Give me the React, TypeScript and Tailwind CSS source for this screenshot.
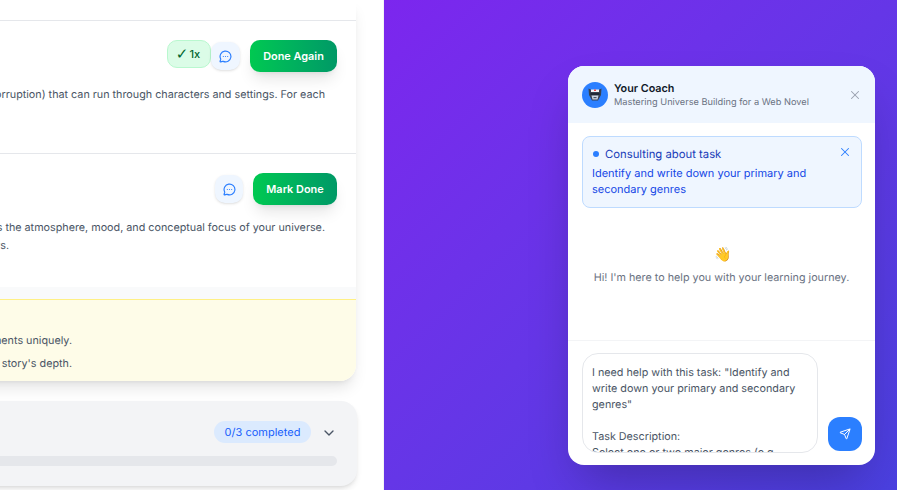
import { X, Send, ChevronDown, MessageCircleMore } from "lucide-react";

function Line({ pr, className, children }: { pr: string; className: string; children: React.ReactNode }) {
  return <div className={`whitespace-nowrap text-right ${pr} ${className}`}>{children}</div>;
}

function ChatBtn({ className }: { className: string }) {
  return (
    <button className={`flex h-[28px] items-center justify-center rounded-[10px] bg-blue-50 text-blue-500 shadow-sm ${className}`}>
      <MessageCircleMore size={13} strokeWidth={2.2} />
    </button>
  );
}

function CoachFace() {
  return (
    <svg width="14" height="15" viewBox="0 0 14 15" aria-hidden="true">
      <path d="M0.5 1.5 L3.5 3 H10.5 L13.5 1.5 L13 8 L10 13.5 H4 L1 8 Z" fill="#374151" />
      <rect x="3" y="2.5" width="8" height="2.5" fill="#f3f4f6" />
      <rect x="6" y="2.5" width="2" height="1.5" fill="#ef4444" />
      <rect x="2.5" y="6" width="9" height="2" fill="#1f2937" />
      <path d="M3.5 8.5 H10.5 L9.5 12.5 H4.5 Z" fill="#cbd5e1" />
      <rect x="5.5" y="10" width="3" height="1.2" fill="#475569" />
    </svg>
  );
}

export default function App() {
  return (
    <div className="flex h-[490px] w-[897px] overflow-hidden bg-white font-['Inter',sans-serif] [text-rendering:geometricPrecision]">
      <div className="relative h-full w-[384px] shrink-0 overflow-hidden border-r border-gray-100 bg-white">
        <div className="ml-[-344px] w-[700px]">
          <div className="overflow-hidden rounded-b-[16px] bg-white shadow-lg">
            <div className="h-[21px] border-b border-gray-200" />
            <div className="h-[133px] border-b border-gray-200">
              <div className="flex items-start justify-end pr-[19px] pt-[19px]">
                <div className="flex h-[28px] w-[44px] items-center justify-center gap-[1px] rounded-[10px] border border-green-200 bg-green-100 pr-[2px] pt-[1px] text-[11px] font-medium text-green-800">
                  <span className="font-['DejaVu_Sans',sans-serif] text-[15px] leading-none">✓</span>
                  <span>1x</span>
                </div>
                <div className="mt-[2px]"><ChatBtn className="w-[29px]" /></div>
                <button className="ml-[10px] h-[32px] w-[87px] rounded-[10px] bg-gradient-to-r from-green-500 to-emerald-600 text-[10.9px] font-semibold text-white shadow-lg">Done Again</button>
              </div>
              <Line pr="pr-[31px]" className="mt-[13px] text-[10.78px] leading-[19px] text-gray-600">(corruption) that can run through characters and settings. For each</Line>
            </div>
            <div className="h-[133px] bg-white">
              <div className="flex items-center justify-end pr-[19px] pt-[19px]">
                <ChatBtn className="w-[28px]" />
                <button className="ml-[10px] h-[32px] w-[84px] rounded-[10px] bg-gradient-to-r from-green-500 to-emerald-600 text-[10.9px] font-semibold text-white shadow-lg">Mark Done</button>
              </div>
              <Line pr="pr-[31px]" className="mt-[13px] text-[10.78px] leading-[19px] text-gray-600">defines the atmosphere, mood, and conceptual focus of your universe.</Line>
              <Line pr="pr-[347px]" className="text-[10.78px] leading-[18px] text-gray-600">follows.</Line>
            </div>
            <div className="h-[12px] bg-gray-50" />
            <div className="h-[82px] border-t border-yellow-200 bg-yellow-50 pt-[29px]">
              <Line pr="pr-[284px]" className="text-[10.78px] leading-[23px] text-gray-600">elements uniquely.</Line>
              <Line pr="pr-[284px]" className="text-[10.78px] leading-[23px] text-gray-600">your story's depth.</Line>
            </div>
          </div>
          <div className="mt-[20px] h-[85px] w-[701px] rounded-[16px] bg-gray-100 pr-[20px] pt-[20px] shadow-md">
            <div className="flex items-center justify-end">
              <span className="flex h-[22px] w-[97px] items-center justify-center rounded-full bg-blue-100 pt-[1px] text-[11px] text-blue-600">0/3 completed</span>
              <ChevronDown size={16} className="ml-[10px] mt-[1px] text-gray-600" />
            </div>
            <div className="mt-[13px] h-[10px] rounded-full bg-gray-200" />
          </div>
        </div>
      </div>
      <div className="flex flex-1 items-start justify-end bg-gradient-to-br from-[#7c26ee] to-[#4a40e0] pr-[22px] pt-[66px]">
        <div className="flex h-[399px] w-[307px] flex-col overflow-hidden rounded-[16px] bg-white shadow-2xl">
          <div className="flex h-[57px] shrink-0 items-center bg-blue-50 px-[14px]">
            <div className="flex h-[26px] w-[26px] items-center justify-center rounded-full bg-blue-500">
              <CoachFace />
            </div>
            <div className="ml-[6px] flex-1 pt-[1px]">
              <div className="text-[10.78px] font-semibold leading-[14px] text-gray-900">Your Coach</div>
              <div className="text-[9.24px] leading-[13px] text-gray-500">Mastering Universe Building for a Web Novel</div>
            </div>
            <X size={14} className="mr-[-1px] text-gray-400" strokeWidth={1.8} />
          </div>
          <div className="pl-[14px] pr-[13px] pt-[13px]">
            <div className="h-[72px] rounded-[8px] border border-blue-200 bg-blue-50 px-[9px] pt-[9px]">
              <div className="flex items-center justify-between">
                <div className="flex items-center gap-[7px]">
                  <span className="ml-[1px] h-[6px] w-[6px] rounded-full bg-blue-500" />
                  <span className="ml-[-1px] text-[11.3px] leading-[16px] text-blue-800">Consulting about task</span>
                </div>
                <X size={14} className="mt-[-4px] text-blue-500" strokeWidth={1.8} />
              </div>
              <div className="mt-[3px] text-[11px] leading-[16px] text-blue-700">Identify and write down your primary and secondary genres</div>
            </div>
          </div>
          <div className="flex flex-1 flex-col items-center pt-[38px]">
            <div className="ml-[3px] text-[14px] leading-[18px]">👋</div>
            <div className="mt-[6px] text-[10.78px] leading-[16px] text-gray-500">Hi! I'm here to help you with your learning journey.</div>
          </div>
          <div className="flex h-[125px] items-end gap-[10px] border-t border-gray-100 pb-[12px] pl-[14px] pr-[13px]">
            <div className="h-[100px] w-[236px] shrink-0 overflow-hidden whitespace-pre-wrap rounded-[16px] border border-gray-200 px-[9px] pt-[11px] text-[10.78px] leading-[16px] text-gray-600">{'I need help with this task: "Identify and write down your primary and secondary genres"\n\nTask Description:\nSelect one or two major genres (e.g.'}</div>
            <button className="mb-[2px] flex h-[34px] w-[34px] items-center justify-center rounded-[12px] bg-blue-500">
              <Send size={12} className="text-white" />
            </button>
          </div>
        </div>
      </div>
    </div>
  );
}
